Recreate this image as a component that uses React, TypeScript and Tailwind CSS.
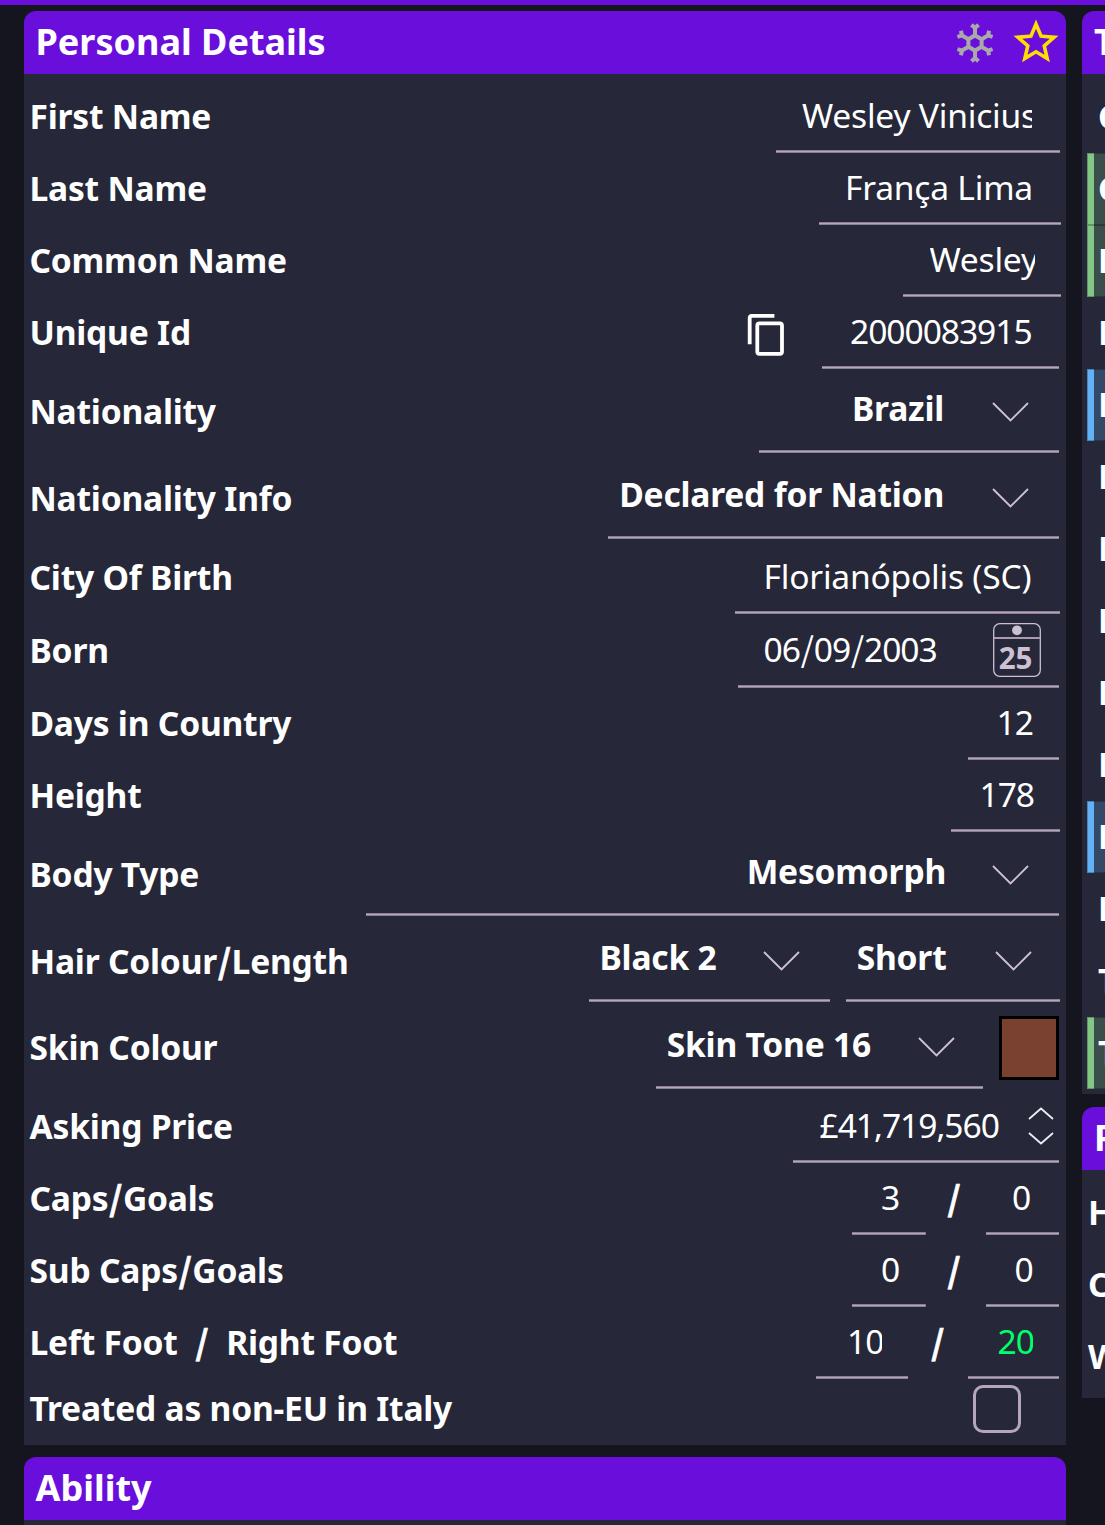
import type { ReactNode } from "react";
import { clsx } from "clsx";
import { MdContentCopy, MdStarBorder } from "react-icons/md";

type Mark = "green" | "blue" | null;

const TECHNICAL: [string, Mark][] = [
  ["Corners", null],
  ["Crossing", "green"],
  ["Dribbling", "green"],
  ["Finishing", null],
  ["First Touch", "blue"],
  ["Free Kick Taking", null],
  ["Heading", null],
  ["Long Shots", null],
  ["Long Throws", null],
  ["Marking", null],
  ["Passing", "blue"],
  ["Penalty Taking", null],
  ["Tackling", null],
  ["Technique", "green"],
];

const REPUTATION = ["Home", "Current", "World"];

// 3px rule along the bottom edge, softer on its outer pixels
const UNDERLINE =
  "bg-[linear-gradient(#8b7f93_1px,#b5a6bb_1px,#b5a6bb_2px,#8b7f93_2px)] bg-[length:100%_3px] bg-bottom bg-no-repeat pb-[2.4px]";

export default function App() {
  return (
    <div className="h-[1525px] w-[1105px] overflow-hidden bg-[#15151f] font-['Noto_Sans',sans-serif] text-[33.6px] leading-none tracking-[-0.22px] text-white">
      <div className="h-[5px] bg-[#6a0fdb]" />
      <div className="mt-1.5 flex items-start gap-4 pl-[23.5px]">
        <div className="w-[1042.5px] shrink-0">
          <PersonalDetails />
          <section className="mt-3">
            <PanelHeader title="Ability" />
            <div className="h-10 bg-[#262738]" />
          </section>
        </div>
        <div className="w-[1042px] shrink-0">
          <section className="bg-[#262738] pb-[5px]">
            <PanelHeader title="Technical" />
            <div className="pt-[7.2px] pl-[5px]">
              {TECHNICAL.map(([name, mark]) => (
                <AttributeRow key={name} name={name} mark={mark} />
              ))}
            </div>
          </section>
          <section className="mt-[12.8px] bg-[#262738] pb-[5px]">
            <PanelHeader title="Reputation" />
            <div className="pt-[7.2px] pl-1.5">
              {REPUTATION.map((name) => (
                <div key={name} className="flex h-[72px] items-center font-bold">
                  {name}
                </div>
              ))}
            </div>
          </section>
        </div>
      </div>
    </div>
  );
}

function PersonalDetails() {
  return (
    <section className="bg-[#262738] pb-[5.8px]">
      <PanelHeader title="Personal Details">
        <Snowflake />
        <MdStarBorder size={54} className="mr-[3px] ml-3.5 text-[#ffde00]" />
      </PanelHeader>
      <div className="pt-[7.2px] pr-[7px] pl-1.5">
        <Row label="First Name">
          <Field className="-mr-px w-[284.5px]" pad="pl-[26.5px] pr-7">
            Wesley Vinicius
          </Field>
        </Row>
        <Row label="Last Name">
          <Field className="-mr-0.5 w-[242px]" pad="pl-[26px] pr-[27px]">
            França Lima
          </Field>
        </Row>
        <Row label="Common Name">
          <Field className="-mr-0.5 w-[158px]">Wesley</Field>
        </Row>
        <Row label="Unique Id">
          <MdContentCopy size={45.6} className="mt-1 mr-8 self-center" />
          <Field numeric className="w-[237px]" pad="pl-7 pr-[25px]">
            2000083915
          </Field>
        </Row>

        <Row label="Nationality" size="select">
          <Select className="w-[300px]">Brazil</Select>
        </Row>
        <Row label="Nationality Info" size="select">
          <Select className="w-[451.5px]">Declared for Nation</Select>
        </Row>
        <Row label="City Of Birth">
          <Field className="-mr-px w-[325px]" pad="pl-[28.5px] pr-[25px]">
            Florianópolis (SC)
          </Field>
        </Row>
        <Row label="Born" size="date">
          <Field
            numeric
            className="w-[321.5px]"
            pad="pl-[26px] pr-[18px]"
            icon={<Calendar />}
          >
            <Slashed text="06/09/2003" />
          </Field>
        </Row>
        <Row label="Days in Country">
          <Field numeric className="w-[91.5px]" pad="pl-[29px] pr-[25px]">
            12
          </Field>
        </Row>
        <Row label="Height">
          <Field numeric className="-mr-px w-[109px]" pad="pl-[28.5px] pr-[26px]">
            178
          </Field>
        </Row>

        <Row label="Body Type" size="select">
          <Select className="w-[693.5px]" gap="ml-[46px]">
            Mesomorph
          </Select>
        </Row>
        <Row label="Hair Colour/Length" size="select">
          <Select className="mr-4 w-[241px]" gap="ml-[46px]">
            Black 2
          </Select>
          <Select className="-mr-px w-[214.5px]" pad="pr-[28.5px]">
            Short
          </Select>
        </Row>
        <Row label="Skin Colour" size="select">
          <Select className="mr-4 w-[327.5px]" pad="pr-7" gap="ml-[47px]">
            Skin Tone 16
          </Select>
          <div className="mt-px h-[63.5px] w-[60px] self-center border-[3px] border-black bg-[#7a4030]" />
        </Row>

        <Row label="Asking Price">
          <Field
            numeric
            className="w-[266.5px]"
            pad="pl-[27px] pr-[5px]"
            icon={<Spinner />}
          >
            £41,719,560
          </Field>
        </Row>
        <Row label="Caps/Goals">
          <Field numeric className="w-[73.5px]" pad="pl-[29px] pr-[26px]">
            3
          </Field>
          <Slash className="w-[60px] pr-[3px]" />
          <Field numeric className="w-[73.5px]">
            0
          </Field>
        </Row>
        <Row label="Sub Caps/Goals">
          <Field numeric className="w-[73.5px]" pad="pl-[29px] pr-[26px]">
            0
          </Field>
          <Slash className="w-[60px] pr-[3px]" />
          <Field numeric className="w-[73.5px]" pad="pl-[29px] pr-[26px]">
            0
          </Field>
        </Row>
        <Row label="Left Foot  /  Right Foot">
          <Field numeric className="w-[92px]" pad="pl-[31px] pr-[26.5px]">
            10
          </Field>
          <Slash className="w-[59.5px]" />
          <Field
            numeric
            className="w-[91.5px] text-[#00ff6a]"
            pad="pl-[30px] pr-[26.5px]"
          >
            20
          </Field>
        </Row>
        <Row label="Treated as non-EU in Italy" size="check">
          <div className="mr-[38.5px] size-12 self-center rounded-[10px] border-[3px] border-[#b5a6bb]" />
        </Row>
      </div>
    </section>
  );
}

function PanelHeader({
  title,
  children,
}: {
  title: string;
  children?: ReactNode;
}) {
  return (
    // the outer colour keeps the rounded corners clear of the panel body
    <div className="bg-[#15151f]">
      <header className="flex h-[62.8px] items-center rounded-t-xl bg-[#6a0fdb] pl-3">
        <h2 className="flex-1 text-[36px] font-bold tracking-normal">
          {title}
        </h2>
        {children}
      </header>
    </div>
  );
}

function Row({
  label,
  size = "text",
  children,
}: {
  label: string;
  size?: "text" | "date" | "select" | "check";
  children: ReactNode;
}) {
  return (
    <div
      className={clsx(
        "flex",
        size === "text" && "h-[72px]",
        size === "date" && "h-[74px]",
        size === "select" && "h-[86.4px]",
        size === "check" && "h-[60px]",
      )}
    >
      <span className="flex-1 self-center font-bold whitespace-pre">
        <Slashed text={label} bold />
      </span>
      {children}
    </div>
  );
}

// Noto Sans has a short slash, the CJK cut drops below the baseline
function Slashed({ text, bold }: { text: string; bold?: boolean }) {
  return text.split("/").map((part, i) => (
    <span key={i}>
      {i > 0 && (
        <span
          className={clsx(
            "px-[0.9px] font-['Noto_Sans_CJK_SC',sans-serif] leading-[0]",
            bold && "[-webkit-text-stroke:0.7px_white]",
          )}
        >
          /
        </span>
      )}
      {part}
    </span>
  ));
}

function Field({
  className,
  pad = "px-[26.5px]",
  numeric,
  icon,
  children,
}: {
  className?: string;
  pad?: string;
  numeric?: boolean;
  icon?: ReactNode;
  children: ReactNode;
}) {
  return (
    <div className={clsx("flex items-center", UNDERLINE, pad, className)}>
      <span
        className={clsx(
          "flex-1 overflow-hidden py-2 whitespace-nowrap",
          numeric && "tracking-[-1.05px]",
        )}
      >
        {children}
      </span>
      {icon}
    </div>
  );
}

function Select({
  className,
  pad = "pr-[30px]",
  gap = "ml-12",
  children,
}: {
  className?: string;
  pad?: string;
  gap?: string;
  children: ReactNode;
}) {
  return (
    <div
      className={clsx(
        "mb-[2.4px] flex items-center justify-end",
        UNDERLINE,
        pad,
        className,
      )}
    >
      <span className="pb-0.5 font-bold whitespace-nowrap">{children}</span>
      <svg
        viewBox="0 0 37 20"
        className={clsx("mt-1 h-5 w-[37px]", gap)}
        fill="none"
        stroke="#cdc0d2"
        strokeWidth="1.9"
      >
        <path d="M1 1l17.5 17.5L36 1" />
      </svg>
    </div>
  );
}

function Slash({ className }: { className: string }) {
  return (
    <span className={clsx("self-center text-center font-bold", className)}>
      <Slashed text="/" bold />
    </span>
  );
}

function Spinner() {
  return (
    <svg
      viewBox="0 0 26 38"
      className="ml-7 h-[38px] w-[26px]"
      fill="none"
      stroke="#f0ebf2"
      strokeWidth="1.8"
    >
      <path d="M1 12L13 1.5 25 12M1 26l12 10.5L25 26" />
    </svg>
  );
}

function Calendar() {
  return (
    <svg viewBox="0 0 48 54" className="mt-[1.5px] h-[54px] w-12">
      <rect
        x="0.7"
        y="0.7"
        width="46.6"
        height="52.6"
        rx="6"
        fill="none"
        stroke="#cdc0d2"
        strokeWidth="1.3"
      />
      <path d="M1 15h46" stroke="#a99cae" strokeWidth="1.8" />
      <circle cx="24" cy="7.3" r="4.9" fill="#cdc0d2" />
      <text
        x="22.5"
        y="45.5"
        textAnchor="middle"
        fontSize="29.5"
        fontWeight="700"
        fill="#cdc0d2"
      >
        25
      </text>
    </svg>
  );
}

function Snowflake() {
  return (
    <svg
      viewBox="-20 -20 40 40"
      className="mt-0.5 size-10"
      fill="none"
      stroke="#a9a9a9"
      strokeWidth="4"
    >
      <path d="M0-7.6L6.6-3.8V3.8L0 7.6-6.6 3.8V-3.8Z" />
      {[0, 60, 120, 180, 240, 300].map((angle) => (
        <path
          key={angle}
          transform={`rotate(${angle})`}
          d="M0-8V-15.5M-3.5-18.3L0-15 3.5-18.3"
        />
      ))}
    </svg>
  );
}

function AttributeRow({ name, mark }: { name: string; mark: Mark }) {
  return (
    <div
      className={clsx(
        "flex h-[72px] items-center border-l-[7px] pl-1 font-bold",
        !mark && "border-transparent",
        mark && "outline-1 -outline-offset-1 outline-black/25",
        mark === "green" && "border-[#82c785] bg-[#3b4e4c]",
        mark === "blue" && "border-[#64b2f6] bg-[#344968]",
      )}
    >
      {name}
    </div>
  );
}
